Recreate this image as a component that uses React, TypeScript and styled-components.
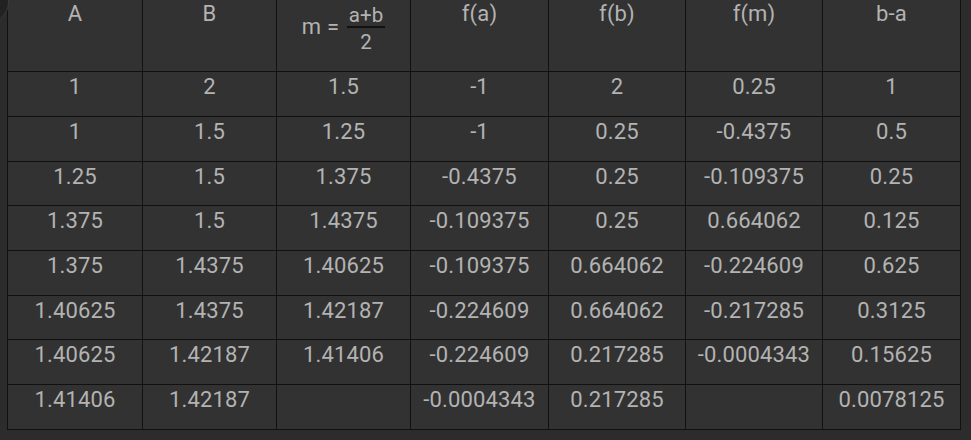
import React from "react";
import styled, { createGlobalStyle } from "styled-components";

const Global = createGlobalStyle`
  html, body {
    margin: 0;
    padding: 0;
    background: #2c2c2c;
  }
  body {
    font-family: Roboto, "Noto Sans", "Liberation Sans", sans-serif;
    overflow: hidden;
  }
`;

const Page = styled.div`
  position: relative;
  width: 971px;
  height: 440px;
  background: #2c2c2c;
  overflow: hidden;
`;

const Corner = styled.div`
  position: absolute;
  left: -22px;
  top: -16px;
  width: 30px;
  height: 36px;
  border-radius: 50%;
  background: #222222;
  box-shadow: 1px 0 0 #3a3a3a;
`;

const Table = styled.table`
  border-collapse: collapse;
  table-layout: fixed;
  width: 953px;
  margin: -1px 0 0 7px;
  background: #323232;
  color: #b3b3b3;
  font-size: 22px;
  letter-spacing: 0.15px;
  line-height: 24px;
`;

const Col = styled.col<{ $w: number }>`
  width: ${(p) => p.$w}px;
`;

const Cell = styled.td`
  border: 1px solid #111111;
  height: 44.67px;
  padding: 3px 0 0;
  box-sizing: border-box;
  text-align: center;
  vertical-align: top;
  white-space: nowrap;
`;

const HeadCell = styled.th`
  border: 1px solid #111111;
  height: 72.3px;
  padding: 2px 0 0;
  box-sizing: border-box;
  text-align: center;
  vertical-align: top;
  white-space: nowrap;
  font-weight: 400;
`;

const Formula = styled.span`
  display: inline-flex;
  align-items: center;
  gap: 8px;
`;

const Frac = styled.span`
  display: inline-flex;
  flex-direction: column;
  align-items: center;
  font-size: 20.5px;
  line-height: 20px;
  padding-top: 3px;
`;

const Bar = styled.span`
  display: block;
  width: 38px;
  height: 2px;
  background: #111111;
  margin: 1px 0 4px;
`;

const widths = [135, 134, 134, 138, 137, 137, 138];

const heads = ["A", "B", "", "f(a)", "f(b)", "f(m)", "b-a"];

const rows: string[][] = [
  ["1", "2", "1.5", "-1", "2", "0.25", "1"],
  ["1", "1.5", "1.25", "-1", "0.25", "-0.4375", "0.5"],
  ["1.25", "1.5", "1.375", "-0.4375", "0.25", "-0.109375", "0.25"],
  ["1.375", "1.5", "1.4375", "-0.109375", "0.25", "0.664062", "0.125"],
  ["1.375", "1.4375", "1.40625", "-0.109375", "0.664062", "-0.224609", "0.625"],
  ["1.40625", "1.4375", "1.42187", "-0.224609", "0.664062", "-0.217285", "0.3125"],
  ["1.40625", "1.42187", "1.41406", "-0.224609", "0.217285", "-0.0004343", "0.15625"],
  ["1.41406", "1.42187", "", "-0.0004343", "0.217285", "", "0.0078125"],
];

function MidFormula() {
  return (
    <Formula>
      <span>m =</span>
      <Frac>
        <span>a+b</span>
        <Bar />
        <span>2</span>
      </Frac>
    </Formula>
  );
}

export default function App() {
  return (
    <Page>
      <Global />
      <Corner />
      <Table>
        <colgroup>
          {widths.map((w, i) => (
            <Col key={i} $w={w} />
          ))}
        </colgroup>
        <thead>
          <tr>
            {heads.map((h, i) => (
              <HeadCell key={i}>{i === 2 ? <MidFormula /> : h}</HeadCell>
            ))}
          </tr>
        </thead>
        <tbody>
          {rows.map((r, i) => (
            <tr key={i}>
              {r.map((c, j) => (
                <Cell key={j}>{c}</Cell>
              ))}
            </tr>
          ))}
        </tbody>
      </Table>
    </Page>
  );
}
